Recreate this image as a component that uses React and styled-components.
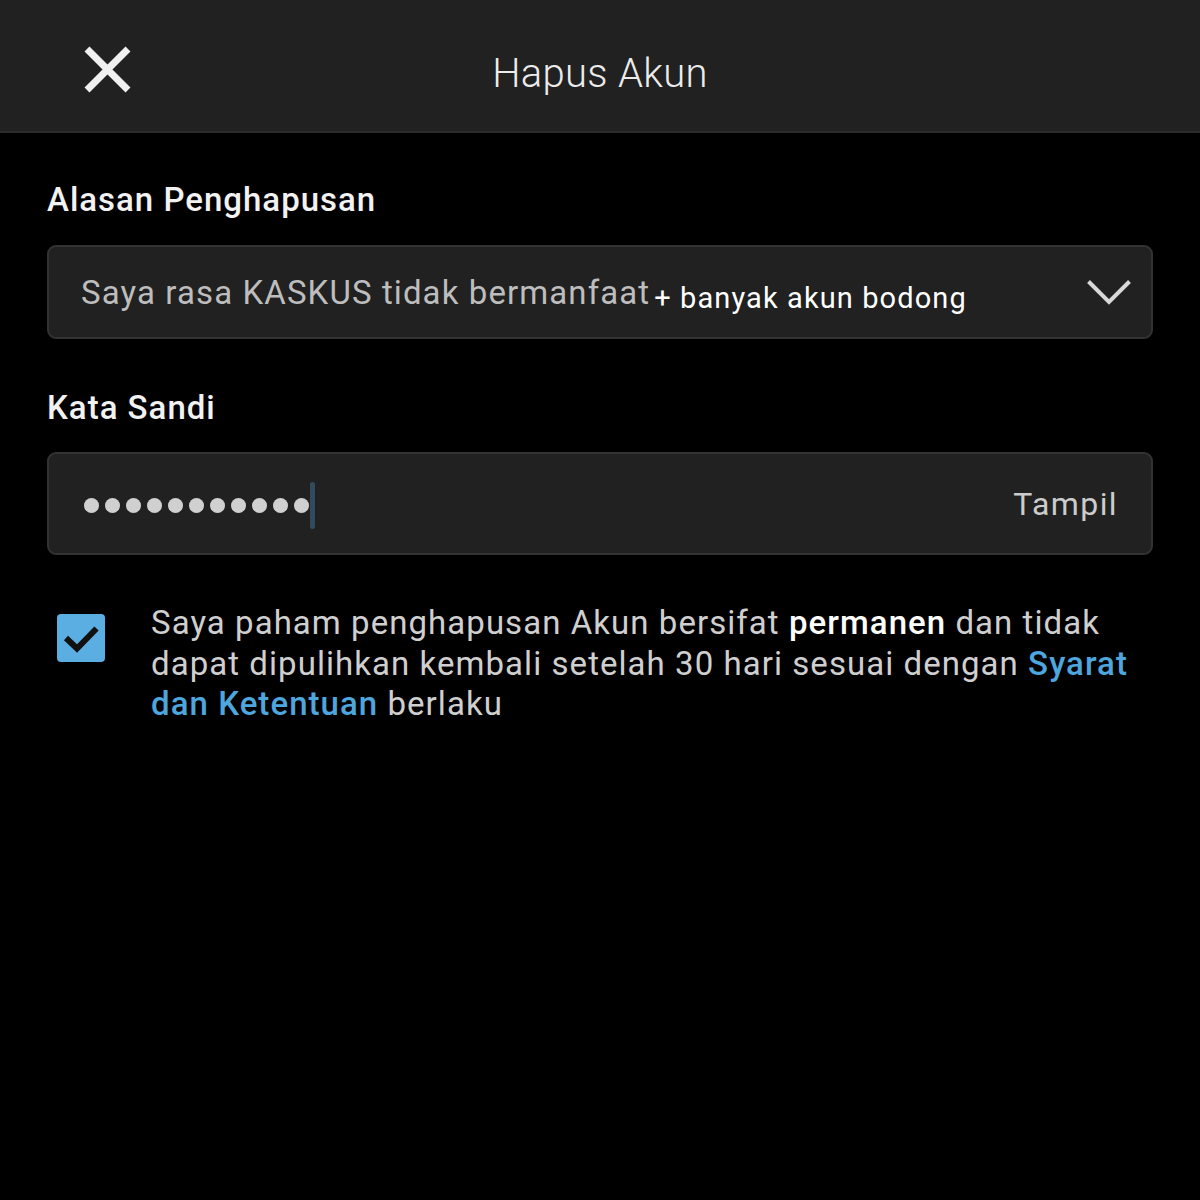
import React from "react";
import styled, { createGlobalStyle } from "styled-components";

const Global = createGlobalStyle`
  html, body { margin: 0; padding: 0; background: #000; }
  body { font-family: Roboto, "Noto Sans", sans-serif; -webkit-font-smoothing: antialiased; }
`;

const Screen = styled.div`
  width: 1200px;
  min-height: 1200px;
  background: #000;
  color: #cfcfcf;
`;

const TopBar = styled.header`
  height: 131px;
  background: #212121;
  border-bottom: 2px solid #2c2c2c;
  display: grid;
  grid-template-columns: 214px 1fr 214px;
  align-items: center;
`;

const CloseButton = styled.button`
  align-self: start;
  background: none;
  border: none;
  padding: 0;
  margin: 46px 0 0 84px;
  width: 47px;
  height: 47px;
  display: flex;
  cursor: pointer;
`;

const Title = styled.h1`
  margin: 0;
  padding-top: 16px;
  text-align: center;
  font-family: Roboto, sans-serif;
  font-weight: 300;
  font-size: 40px;
  color: #ececec;
  letter-spacing: 0.3px;
`;

const Content = styled.main`
  padding: 47px 47px 0 47px;
  display: flex;
  flex-direction: column;
`;

const Label = styled.label`
  font-family: Roboto, sans-serif;
  font-weight: 500;
  font-size: 33px;
  color: #f2f2f2;
  line-height: 40px;
  letter-spacing: 1px;
  margin-bottom: ${(p) => p.$gap}px;
`;

const Field = styled.div`
  box-sizing: border-box;
  height: ${(p) => p.$h}px;
  background: #212121;
  border: 2px solid #333333;
  border-radius: 9px;
  display: flex;
  align-items: center;
  padding: 0 ${(p) => p.$pr}px 0 ${(p) => p.$pl}px;
  margin-bottom: ${(p) => p.$mb}px;
`;

const SelectValue = styled.span`
  flex: 1;
  font-size: 33px;
  color: #bdbdbd;
  display: flex;
  align-items: baseline;
  letter-spacing: 1.1px;
  white-space: nowrap;
`;

const Extra = styled.span`
  font-size: 29px;
  color: #ffffff;
  margin-left: 4px;
  position: relative;
  top: 4px;
  letter-spacing: 1.1px;
`;

const Dots = styled.div`
  flex: 1;
  display: flex;
  align-items: center;
  gap: 6px;
  padding-top: 3px;
`;

const Dot = styled.span`
  width: 15px;
  height: 15px;
  border-radius: 50%;
  background: #d0d0d0;
`;

const Caret = styled.span`
  width: 5px;
  height: 47px;
  border-radius: 2px;
  background: #2f4b5c;
  margin-left: -5px;
`;

const ShowToggle = styled.span`
  font-size: 32px;
  color: #cccccc;
  letter-spacing: 1.4px;
  margin-right: -2px;
`;

const Agreement = styled.div`
  display: flex;
  align-items: flex-start;
`;

const Box = styled.span`
  flex: none;
  width: 48px;
  height: 48px;
  border-radius: 4px;
  background: #5aaee2;
  margin: 10px 0 0 10px;
  display: flex;
`;

const AgreeText = styled.p`
  margin: -1px 0 0 46px;
  font-size: 33px;
  line-height: 40.5px;
  color: #cfcfcf;
  letter-spacing: 1.05px;
`;

const Strong = styled.b`
  font-weight: 500;
  color: #ffffff;
`;

const Link = styled.a`
  font-weight: 500;
  color: #4ea6de;
  text-decoration: none;
`;

export default function App() {
  return (
    <Screen>
      <Global />
      <TopBar>
        <CloseButton aria-label="Tutup">
          <svg width="47" height="47" viewBox="0 0 47 47">
            <path d="M3 3 L44 44 M44 3 L3 44" stroke="#f0f0f0" strokeWidth="7" />
          </svg>
        </CloseButton>
        <Title>Hapus Akun</Title>
        <div />
      </TopBar>
      <Content>
        <Label $gap={25}>Alasan Penghapusan</Label>
        <Field $h={94} $mb={49} $pl={32} $pr={20}>
          <SelectValue>
            Saya rasa KASKUS tidak bermanfaat
            <Extra>+ banyak akun bodong</Extra>
          </SelectValue>
          <svg width="44" height="25" viewBox="0 0 44 25">
            <path d="M1.5 1.5 L22 22 L42.5 1.5" fill="none" stroke="#d8d8d8" strokeWidth="4" />
          </svg>
        </Field>
        <Label $gap={24}>Kata Sandi</Label>
        <Field $h={103} $mb={49} $pl={35} $pr={35}>
          <Dots>
            {Array.from({ length: 11 }).map((_, i) => (
              <Dot key={i} />
            ))}
            <Caret />
          </Dots>
          <ShowToggle>Tampil</ShowToggle>
        </Field>
        <Agreement>
          <Box>
            <svg width="48" height="48" viewBox="0 0 48 48">
              <path d="M9 24 L20 34.5 L39.5 14.5" fill="none" stroke="#111" strokeWidth="6" />
            </svg>
          </Box>
          <AgreeText>
            Saya paham penghapusan Akun bersifat <Strong>permanen</Strong> dan tidak
            dapat dipulihkan kembali setelah 30 hari sesuai dengan{" "}
            <Link href="#">Syarat dan Ketentuan</Link> berlaku
          </AgreeText>
        </Agreement>
      </Content>
    </Screen>
  );
}
